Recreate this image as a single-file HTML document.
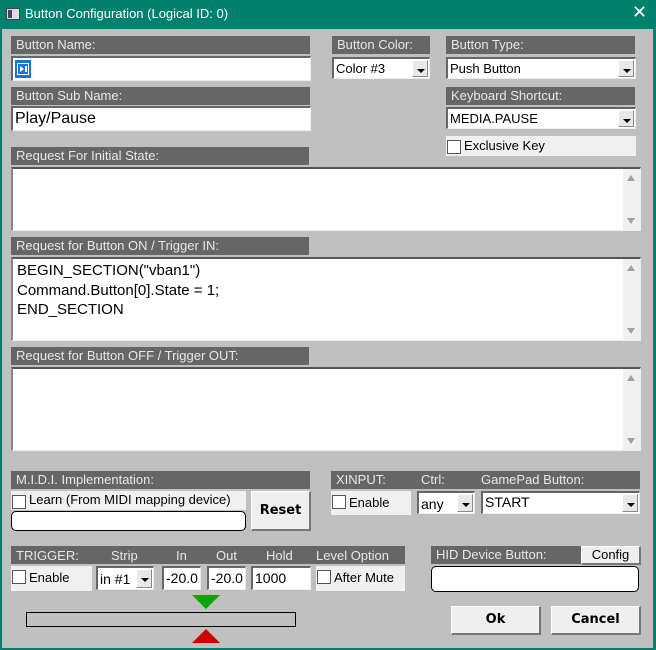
<!DOCTYPE html><html><head><style>
*{box-sizing:border-box;margin:0;padding:0}
body{width:656px;height:650px;background:#00806e;font-family:"Liberation Sans",Arial,Helvetica,sans-serif;position:relative;overflow:hidden}
.a{position:absolute}
#win{left:2px;top:29px;width:651px;height:619px;background:#c0c0c0}
.h{position:absolute;height:18px;background:#666;color:#e8e8e8;font-size:13px;line-height:18px;padding-left:5px;white-space:nowrap}
.in{position:absolute;background:#fff;border-top:2px solid #666;border-left:2px solid #666;border-right:1px solid #eee;border-bottom:1px solid #eee;font-size:13px;line-height:19px;padding-left:2px;color:#000;white-space:nowrap}
.sel .ar{position:absolute;right:1px;top:1px;width:16px;bottom:1px;background:#e8e8e8;border:1px solid #888;border-top-color:#fff;border-left-color:#fff}
.sel .ar:after{content:"";position:absolute;left:4px;top:8px;border-left:4px solid transparent;border-right:4px solid transparent;border-top:4px solid #000}
.box{position:absolute;background:#f0f0f0;font-size:13px;line-height:20px;padding-left:20px;white-space:nowrap}
.box:before{content:"";position:absolute;left:1px;top:4px;width:12px;height:12px;background:#fff;border:1px solid #555}
.ta{position:absolute;left:11px;width:630px;background:#fff;border-top:2px solid #555;border-left:2px solid #888;border-right:1px solid #eee;border-bottom:1px solid #eee;font-size:15px;line-height:19.5px;padding:2px 4px}
.sb{position:absolute;right:0;top:0;bottom:0;width:17px;background:#f0f0f0}
.sb:before{content:"";position:absolute;left:4px;top:6px;border-left:4px solid transparent;border-right:4px solid transparent;border-bottom:6px solid #a0a0a0}
.sb:after{content:"";position:absolute;left:4px;bottom:6px;border-left:4px solid transparent;border-right:4px solid transparent;border-top:6px solid #a0a0a0}
.btn{position:absolute;background:#efefef;border:1px solid #fff;border-right:2px solid #777;border-bottom:2px solid #777;font-weight:bold;font-size:13px;text-align:center;font-family:"DejaVu Sans",sans-serif}
.rb{position:absolute;background:#fff;border:1px solid #000;border-radius:5px}
.lbl{position:absolute;color:#e8e8e8;font-size:13px;line-height:18px}
</style></head><body>
<div class="a" style="left:6px;top:8px;width:14px;height:12px;background:#ddd;border:1px solid #444"><div class="a" style="left:1px;top:1px;width:4px;height:8px;background:#446"></div></div>
<div class="a" style="left:25px;top:6px;color:#fff;font-size:13px">Button Configuration (Logical ID: 0)</div>
<div class="a" style="left:632px;top:2px;color:#fff;font-size:18px">✕</div>
<div id="win" class="a"></div>

<div class="h" style="left:11px;top:36px;width:299px">Button Name:</div>
<div class="in" style="left:11px;top:56px;width:300px;height:25px"><div class="a" style="left:2px;top:2px;width:16px;height:18px;background:#1a73d6"><div class="a" style="left:2px;top:3px;width:12px;height:12px;border:1px solid #fff"></div><div class="a" style="left:5px;top:6px;width:0;height:0;border-top:3px solid transparent;border-bottom:3px solid transparent;border-left:4px solid #fff"></div><div class="a" style="left:10px;top:6px;width:2px;height:6px;background:#fff"></div></div></div>
<div class="h" style="left:11px;top:87px;width:299px">Button Sub Name:</div>
<div class="in" style="left:11px;top:106px;width:300px;height:25px;font-size:16px;line-height:21px">Play/Pause</div>

<div class="h" style="left:332px;top:36px;width:98px">Button Color:</div>
<div class="in sel" style="left:332px;top:57px;width:98px;height:22px">Color #3<div class="ar"></div></div>
<div class="h" style="left:446px;top:36px;width:189px">Button Type:</div>
<div class="in sel" style="left:446px;top:57px;width:190px;height:22px">Push Button<div class="ar"></div></div>
<div class="h" style="left:446px;top:87px;width:189px">Keyboard Shortcut:</div>
<div class="in sel" style="left:446px;top:107px;width:190px;height:22px">MEDIA.PAUSE<div class="ar"></div></div>
<div class="box" style="left:446px;top:136px;width:190px;height:20px;padding-left:18px">Exclusive Key</div>

<div class="h" style="left:11px;top:147px;width:298px">Request For Initial State:</div>
<div class="ta" style="top:167px;height:64px"><div class="sb"></div></div>
<div class="h" style="left:11px;top:237px;width:298px">Request for Button ON / Trigger IN:</div>
<div class="ta" style="top:257px;height:84px">BEGIN_SECTION("vban1")<br>Command.Button[0].State = 1;<br>END_SECTION<div class="sb"></div></div>
<div class="h" style="left:11px;top:347px;width:298px">Request for Button OFF / Trigger OUT:</div>
<div class="ta" style="top:367px;height:84px"><div class="sb"></div></div>

<div class="h" style="left:11px;top:471px;width:299px">M.I.D.I. Implementation:</div>
<div class="box" style="left:11px;top:491px;width:235px;height:19px;line-height:18px;padding-left:18px">Learn (From MIDI mapping device)</div>
<div class="rb" style="left:11px;top:511px;width:235px;height:20px"></div>
<div class="btn" style="left:251px;top:491px;width:60px;height:40px;line-height:37px">Reset</div>

<div class="h" style="left:331px;top:471px;width:309px"></div>
<div class="lbl" style="left:336px;top:471px">XINPUT:</div>
<div class="lbl" style="left:421px;top:471px">Ctrl:</div>
<div class="lbl" style="left:481px;top:471px">GamePad Button:</div>
<div class="box" style="left:331px;top:491px;width:80px;height:24px;line-height:24px;padding-left:18px">Enable</div>
<div class="in sel" style="left:417px;top:491px;width:58px;height:23px;font-size:14px;line-height:22px">any<div class="ar"></div></div>
<div class="in sel" style="left:481px;top:491px;width:159px;height:23px;font-size:14px">START<div class="ar"></div></div>

<div class="h" style="left:11px;top:546px;width:394px"></div>
<div class="lbl" style="left:16px;top:547px">TRIGGER:</div>
<div class="lbl" style="left:111px;top:547px">Strip</div>
<div class="lbl" style="left:176px;top:547px">In</div>
<div class="lbl" style="left:216px;top:547px">Out</div>
<div class="lbl" style="left:266px;top:547px">Hold</div>
<div class="lbl" style="left:316px;top:547px">Level Option</div>
<div class="box" style="left:11px;top:566px;width:81px;height:25px;line-height:24px;padding-left:18px">Enable</div>
<div class="in sel" style="left:96px;top:566px;width:58px;height:24px;font-size:14px;line-height:22px">in #1<div class="ar"></div></div>
<div class="in" style="left:162px;top:566px;width:39px;height:24px;font-size:14px;line-height:21px">-20.0</div>
<div class="in" style="left:207px;top:566px;width:39px;height:24px;font-size:14px;line-height:21px">-20.0</div>
<div class="in" style="left:251px;top:566px;width:60px;height:24px;font-size:14px;line-height:21px">1000</div>
<div class="box" style="left:316px;top:566px;width:89px;height:25px;line-height:24px;padding-left:18px">After Mute</div>

<div class="h" style="left:431px;top:546px;width:150px">HID Device Button:</div>
<div class="btn" style="left:581px;top:546px;width:60px;height:19px;font-weight:normal;font-family:'Liberation Sans',Arial,sans-serif;line-height:16px;font-size:13px">Config</div>
<div class="rb" style="left:431px;top:566px;width:208px;height:26px"></div>

<div class="a" style="left:192px;top:595px;width:0;height:0;border-left:14px solid transparent;border-right:14px solid transparent;border-top:14px solid #0a0"></div>
<div class="a" style="left:26px;top:612px;width:270px;height:15px;border:1px solid #000;background:#c0c0c0"></div>
<div class="a" style="left:192px;top:629px;width:0;height:0;border-left:14px solid transparent;border-right:14px solid transparent;border-bottom:14px solid #c00"></div>

<div class="btn" style="left:451px;top:606px;width:90px;height:29px;line-height:26px">Ok</div>
<div class="btn" style="left:551px;top:606px;width:90px;height:29px;line-height:26px">Cancel</div>
</body></html>
